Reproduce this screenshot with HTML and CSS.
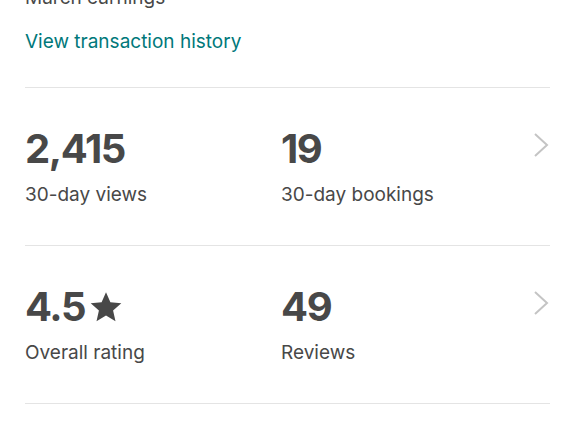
FILE: index.html
```html
<!DOCTYPE html>
<html>
<head>
<meta charset="utf-8">
<link rel="stylesheet" href="styles.css">
</head>
<body>
<div class="page">
  <section class="earnings">
    <div class="earn-label">March earnings</div>
    <a class="link" href="#">View transaction history</a>
  </section>
  <section class="row">
    <div class="stat">
      <div class="num">2,415</div>
      <div class="label">30-day views</div>
    </div>
    <div class="stat">
      <div class="num">19</div>
      <div class="label">30-day bookings</div>
    </div>
    <svg class="chev" viewBox="0 0 16 26" width="16" height="26"><path d="M2 2 L14 13 L2 24" fill="none" stroke="#c4c4c4" stroke-width="2"/></svg>
  </section>
  <section class="row">
    <div class="stat">
      <div class="num">4.5<svg class="star" viewBox="0 0 24 24" width="34" height="34"><path d="M12 1.5 L15.1 8.6 L22.8 9.3 L17 14.4 L18.7 22 L12 18 L5.3 22 L7 14.4 L1.2 9.3 L8.9 8.6 Z" fill="#484848"/></svg></div>
      <div class="label">Overall rating</div>
    </div>
    <div class="stat">
      <div class="num">49</div>
      <div class="label">Reviews</div>
    </div>
    <svg class="chev" viewBox="0 0 16 26" width="16" height="26"><path d="M2 2 L14 13 L2 24" fill="none" stroke="#c4c4c4" stroke-width="2"/></svg>
  </section>
</div>
</body>
</html>
```
FILE: styles.css
```css
html, body {
  margin: 0;
  padding: 0;
  background: #ffffff;
}
body {
  font-family: "Inter", "Liberation Sans", sans-serif;
  color: #484848;
  overflow: hidden;
}
.page {
  padding: 0 26px 0 25px;
}
.earnings {
  margin-top: -14px;
  padding-bottom: 33px;
  border-bottom: 1px solid #e4e4e4;
}
.earn-label {
  font-size: 19px;
  line-height: 24px;
}
.link {
  display: block;
  margin-top: 20px;
  font-size: 19px;
  line-height: 24px;
  color: #00787a;
  text-decoration: none;
}
.row {
  display: grid;
  grid-template-columns: 256px 1fr auto;
  align-items: start;
  padding: 38px 0 38px;
  border-bottom: 1px solid #e4e4e4;
}
.stat {
  display: flex;
  flex-direction: column;
}
.num {
  display: flex;
  align-items: center;
  gap: 4px;
  font-size: 40px;
  font-weight: 700;
  line-height: 46px;
  letter-spacing: -1.4px;
}
.label {
  margin-top: 11px;
  font-size: 19px;
  line-height: 24px;
}
.chev {
  margin-top: 6px;
  margin-right: 1px;
}
```
